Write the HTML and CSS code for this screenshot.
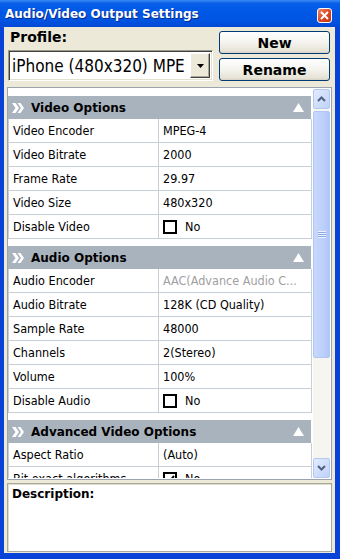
FILE: index.html
```html
<!DOCTYPE html>
<html lang="en">
<head>
    <meta charset="UTF-8">
    <title>Audio/Video Output Settings</title>
    <link rel="stylesheet" href="styles.css">
</head>
<body>
    <div class="window">
        <div class="titlebar">
            <span class="title">Audio/Video Output Settings</span>
            <span class="close">
                <svg width="9" height="9" viewBox="0 0 9 9"><path d="M1 1 L8 8 M8 1 L1 8" stroke="#fff" stroke-width="2"/></svg>
            </span>
        </div>

        <div class="body">
            <div class="profile-row">
                <div class="profile-left">
                    <div class="profile-label">Profile:</div>
                    <div class="combo">
                        <span class="combo-text">iPhone (480x320) MPE</span>
                        <span class="combo-btn">
                            <svg width="7" height="4" viewBox="0 0 7 4"><path d="M0 0 H7 L3.5 4 Z" fill="#000"/></svg>
                        </span>
                    </div>
                </div>
                <div class="profile-buttons">
                    <button class="xp-btn">New</button>
                    <button class="xp-btn">Rename</button>
                </div>
            </div>

            <div class="grid">
                <div class="grid-content">
                    <div class="section">
                        <div class="section-head">
                            <svg class="chev" width="12" height="10" viewBox="0 0 12 10"><path d="M0 0 H3.5 L7 5 L3.5 10 H0 L3.5 5 Z M5.5 0 H8.5 L12 5 L8.5 10 H5.5 L9 5 Z" fill="#fff"/></svg>
                            <span class="section-title">Video Options</span>
                            <svg class="tri" width="11" height="9" viewBox="0 0 11 9"><path d="M5.5 0 L11 9 H0 Z" fill="#fff"/></svg>
                        </div>
                        <div class="row"><div class="cell">Video Encoder</div><div class="cell">MPEG-4</div></div>
                        <div class="row"><div class="cell">Video Bitrate</div><div class="cell">2000</div></div>
                        <div class="row"><div class="cell">Frame Rate</div><div class="cell">29.97</div></div>
                        <div class="row"><div class="cell">Video Size</div><div class="cell">480x320</div></div>
                        <div class="row"><div class="cell">Disable Video</div><div class="cell"><span class="check"></span>No</div></div>
                    </div>

                    <div class="section">
                        <div class="section-head">
                            <svg class="chev" width="12" height="10" viewBox="0 0 12 10"><path d="M0 0 H3.5 L7 5 L3.5 10 H0 L3.5 5 Z M5.5 0 H8.5 L12 5 L8.5 10 H5.5 L9 5 Z" fill="#fff"/></svg>
                            <span class="section-title">Audio Options</span>
                            <svg class="tri" width="11" height="9" viewBox="0 0 11 9"><path d="M5.5 0 L11 9 H0 Z" fill="#fff"/></svg>
                        </div>
                        <div class="row"><div class="cell">Audio Encoder</div><div class="cell disabled">AAC(Advance Audio C...</div></div>
                        <div class="row"><div class="cell">Audio Bitrate</div><div class="cell">128K (CD Quality)</div></div>
                        <div class="row"><div class="cell">Sample Rate</div><div class="cell">48000</div></div>
                        <div class="row"><div class="cell">Channels</div><div class="cell">2(Stereo)</div></div>
                        <div class="row"><div class="cell">Volume</div><div class="cell">100%</div></div>
                        <div class="row"><div class="cell">Disable Audio</div><div class="cell"><span class="check"></span>No</div></div>
                    </div>

                    <div class="section">
                        <div class="section-head">
                            <svg class="chev" width="12" height="10" viewBox="0 0 12 10"><path d="M0 0 H3.5 L7 5 L3.5 10 H0 L3.5 5 Z M5.5 0 H8.5 L12 5 L8.5 10 H5.5 L9 5 Z" fill="#fff"/></svg>
                            <span class="section-title">Advanced Video Options</span>
                            <svg class="tri" width="11" height="9" viewBox="0 0 11 9"><path d="M5.5 0 L11 9 H0 Z" fill="#fff"/></svg>
                        </div>
                        <div class="row"><div class="cell">Aspect Ratio</div><div class="cell">(Auto)</div></div>
                        <div class="row"><div class="cell">Bit exact algorithms</div><div class="cell"><span class="check checked"><svg width="9" height="8" viewBox="0 0 9 8"><path d="M1 4 L3.5 6.5 L8 1" stroke="#000" stroke-width="2" fill="none"/></svg></span>No</div></div>
                    </div>
                </div>

                <div class="scrollbar">
                    <div class="sb-btn">
                        <svg width="9" height="6" viewBox="0 0 9 6"><path d="M1 5 L4.5 1.5 L8 5" stroke="#4d6185" stroke-width="2" fill="none"/></svg>
                    </div>
                    <div class="sb-thumb">
                        <span class="grip"></span>
                    </div>
                    <div class="sb-track"></div>
                    <div class="sb-btn">
                        <svg width="9" height="6" viewBox="0 0 9 6"><path d="M1 1 L4.5 4.5 L8 1" stroke="#4d6185" stroke-width="2" fill="none"/></svg>
                    </div>
                </div>
            </div>

            <div class="description">Description:</div>
        </div>
    </div>
</body>
</html>
```

FILE: styles.css
```css
body { margin: 0; font-family: "DejaVu Sans Condensed", "DejaVu Sans", sans-serif; font-size: 12.5px; color: #000; }

.window { width: 340px; height: 559px; box-sizing: border-box; display: flex; flex-direction: column; background: #0842d6; padding: 0 5px 6px 4px; }

/* title bar */
.titlebar { height: 27px; margin: 0 -5px 0 -4px; display: flex; align-items: center; justify-content: space-between; padding: 0 8px 0 5px; box-sizing: border-box;
    background: linear-gradient(to bottom, #3b8cf5 0%, #0a5fe8 12%, #0058e6 40%, #0054e2 75%, #0048d4 100%); }
.title { color: #fff; font-family: "DejaVu Sans", sans-serif; font-weight: bold; font-size: 12px; text-shadow: 1px 1px 0 #0a2a8a; }
.close { width: 15px; height: 15px; box-sizing: border-box; border: 1px solid #fff; border-radius: 3px; display: flex; align-items: center; justify-content: center;
    background: linear-gradient(to bottom right, #f08a6c, #d9441e 55%, #c0391a); margin-top: 4px; }

.body { flex: 1; background: #ece9d8; display: flex; flex-direction: column; padding: 0 3px; }

/* profile */
.profile-row { display: flex; gap: 6px; padding: 0 2px 0 1px; }
.profile-left { width: 205px; }
.profile-label { font-family: "DejaVu Sans", sans-serif; font-weight: bold; font-size: 14px; height: 23px; line-height: 21px; padding-left: 2px; }
.combo { height: 31px; box-sizing: border-box; background: #fff; display: flex; align-items: center; justify-content: space-between;
    border-top: 1px solid #9d9a8e; border-left: 1px solid #9d9a8e; border-right: 1px solid #fff; border-bottom: 1px solid #fff;
    box-shadow: inset 1px 1px 0 #404040, inset -1px -1px 0 #e3e0d0; padding: 0 2px 0 3px; }
.combo-text { font-size: 17px; white-space: nowrap; overflow: hidden; }
.combo-btn { width: 20px; height: 25px; flex-shrink: 0; box-sizing: border-box; background: #ece9d8; display: flex; align-items: center; justify-content: center;
    border-top: 1px solid #fff; border-left: 1px solid #fff; border-right: 1px solid #404040; border-bottom: 1px solid #404040; box-shadow: inset -1px -1px 0 #aca899; }

.profile-buttons { flex: 1; display: flex; flex-direction: column; gap: 4px; padding-top: 4px; }
.xp-btn { height: 23px; border: 1px solid #003c74; border-radius: 3px; font-family: "DejaVu Sans", sans-serif; font-weight: bold; font-size: 14px; padding: 0;
    background: linear-gradient(to bottom, #ffffff 0%, #f4f3ee 50%, #e6e3d6 90%, #d6d0c5 100%); color: #000; }

/* property grid */
.grid { height: 393px; margin-top: 6px; box-sizing: border-box; border: 1px solid #9aa3ae; background: #fff; display: flex; padding: 1px 1px 1px 0; gap: 1px; }
.grid-content { width: 304px; overflow: hidden; padding-top: 7px; }
.section { margin-bottom: 7px; }
.section-head { height: 23px; background: #a9b3be; display: flex; align-items: center; padding: 0 7px 0 4px; width: 303px; box-sizing: border-box; }
.chev { margin-right: 7px; }
.section-title { font-family: "DejaVu Sans", sans-serif; font-weight: bold; font-size: 12px; flex: 1; }
.row { display: grid; grid-template-columns: 151px 153px; height: 24px; }
.cell { border-bottom: 1px solid #c8ced8; border-right: 1px solid #c8ced8; padding-left: 4px; display: flex; align-items: center; white-space: nowrap; overflow: hidden; }
.cell:first-child { border-left: 1px solid #c8ced8; }
.disabled { color: #a0a0a0; }
.check { width: 14px; height: 14px; box-sizing: border-box; border: 2px solid #000; background: #fff; margin-right: 8px; display: inline-flex; align-items: center; justify-content: center; }

.scrollbar { width: 17px; display: flex; flex-direction: column; background: #f6f5ef; }
.sb-btn { height: 20px; box-sizing: border-box; border: 1px solid #b4c8f6; border-radius: 2px; background: linear-gradient(to bottom right, #e2ebfd, #c0d2fb); display: flex; align-items: center; justify-content: center; }
.sb-thumb { height: 247px; margin-top: 2px; box-sizing: border-box; border: 1px solid #b2c6f4; border-radius: 2px; background: linear-gradient(to right, #c9d8fc, #bcd0fb 60%, #b0c6f8); display: flex; align-items: center; justify-content: center; }
.grip { width: 8px; height: 7px; background: repeating-linear-gradient(to bottom, #eef3fe 0 1px, #8fa9e8 1px 2px); }
.sb-track { flex: 1; }

.description { height: 69px; margin-top: 3px; box-sizing: border-box; border: 1px solid #aca899; box-shadow: inset 1px 1px 0 #e0ddd0; background: #fff; font-family: "DejaVu Sans", sans-serif; font-weight: bold; font-size: 12px; padding: 3px 4px; }
```
